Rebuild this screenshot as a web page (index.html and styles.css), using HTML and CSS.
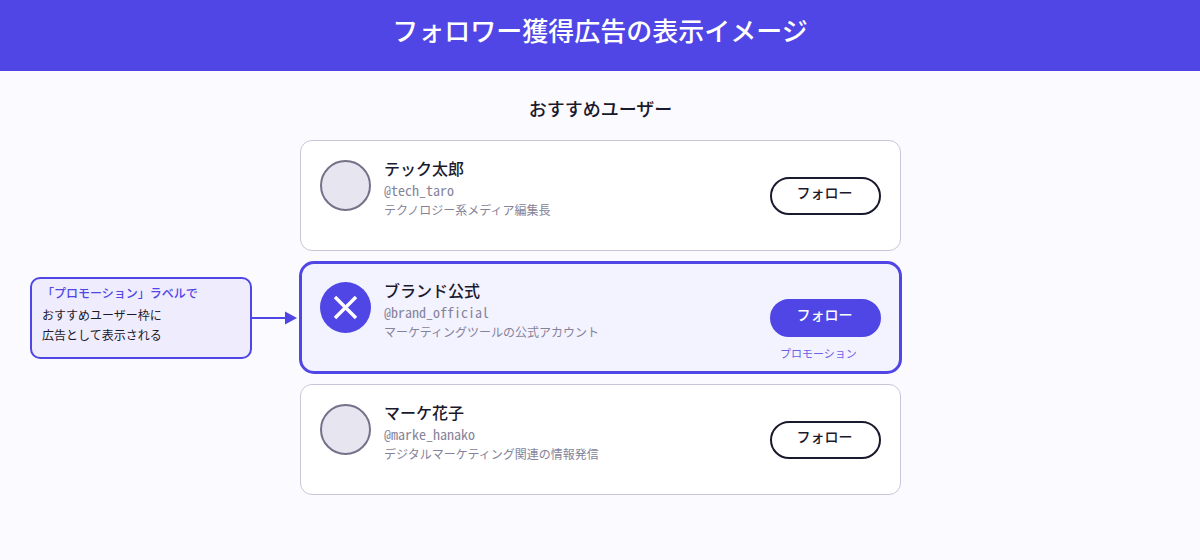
FILE: index.html
```html
<!DOCTYPE html>
<html lang="ja">
<head>
<meta charset="utf-8">
<meta name="viewport" content="width=device-width, initial-scale=1">
<title>フォロワー獲得広告の表示イメージ</title>
<link rel="stylesheet" href="styles.css">
</head>
<body>
<header class="banner"><h1 class="banner-title">フォロワー獲得広告の表示イメージ</h1></header>
<main class="content">
  <h2 class="section-title">おすすめユーザー</h2>
  <div class="board">
    <article class="card">
      <div class="avatar"></div>
      <div class="profile">
        <h3 class="name">テック太郎</h3>
        <p class="handle">@tech_taro</p>
        <p class="bio">テクノロジー系メディア編集長</p>
      </div>
      <div class="action"><button class="follow" type="button">フォロー</button></div>
    </article>
    <aside class="note">
      <div class="note-box">
        <p class="note-title">「プロモーション」ラベルで</p>
        <p class="note-text">おすすめユーザー枠に<br>広告として表示される</p>
      </div>
      <svg class="arrow" width="48" height="14" viewBox="0 0 48 14" aria-hidden="true"><path d="M0 7H36" stroke="#4f46e5" stroke-width="2"/><path d="M33 0.5L45 7L33 13.5Z" fill="#4f46e5"/></svg>
    </aside>
    <article class="card card-promoted">
      <svg class="avatar-brand" width="51" height="51" viewBox="0 0 51 51" aria-hidden="true"><circle cx="25.5" cy="25.5" r="25.5" fill="#4f46e5"/><path d="M15 15L36 36M36 15L15 36" stroke="#fff" stroke-width="3.4"/></svg>
      <div class="profile">
        <h3 class="name">ブランド公式</h3>
        <p class="handle">@brand_official</p>
        <p class="bio">マーケティングツールの公式アカウント</p>
      </div>
      <div class="action">
        <button class="follow follow-primary" type="button">フォロー</button>
        <span class="promo">プロモーション</span>
      </div>
    </article>
    <article class="card">
      <div class="avatar"></div>
      <div class="profile">
        <h3 class="name">マーケ花子</h3>
        <p class="handle">@marke_hanako</p>
        <p class="bio">デジタルマーケティング関連の情報発信</p>
      </div>
      <div class="action"><button class="follow" type="button">フォロー</button></div>
    </article>
  </div>
</main>
</body>
</html>
```
FILE: styles.css
```css
* { box-sizing: border-box; }
body {
  margin: 0;
  background: #fbfaff;
  color: #1a1a2e;
  font-family: "Noto Sans CJK JP", sans-serif;
}
h1, h2, h3, p { margin: 0; }
.banner {
  padding: 11px 0 22px;
  background: #4f46e5;
  color: #fff;
  text-align: center;
}
.banner-title { font-size: 26px; line-height: 38px; font-weight: 500; }
.content { padding: 23px 0 24px 1px; }
.section-title {
  margin-bottom: 18px;
  font-size: 18px;
  line-height: 28px;
  font-weight: 500;
  text-align: center;
}
.board {
  display: grid;
  grid-template-columns: 1fr 601px 1fr;
  row-gap: 11px;
}
.card {
  grid-column: 2;
  display: flex;
  min-height: 111px;
  padding: 19px 19px 10px;
  border: 1px solid #c8c6da;
  border-radius: 12px;
  background: #fff;
}
.card-promoted {
  grid-row: 2;
  margin: -1px;
  padding: 18px 18px 10px;
  border: 3px solid #4f46e5;
  border-radius: 15px;
  background: #f3f2ff;
}
.avatar, .avatar-brand { flex: none; width: 51px; height: 51px; }
.avatar { border: 2px solid #747289; border-radius: 50%; background: #e6e5f0; }
.profile { flex: 1; margin-left: 13px; color: #85839a; }
.name { margin-bottom: 3px; color: #1a1a2e; font-size: 16px; line-height: 16px; font-weight: 500; }
.handle { font-family: "Noto Sans Mono CJK JP", "Liberation Mono", monospace; font-size: 14px; line-height: 22px; }
.bio { font-size: 12px; line-height: 18px; }
.action { display: flex; flex-direction: column; align-items: flex-start; padding-top: 17px; }
.follow {
  width: 111px;
  height: 38px;
  padding: 0 2px 8px 0;
  border: 2px solid #1a1a2e;
  border-radius: 19px;
  background: #fff;
  color: #1a1a2e;
  font: 500 14px/20px "Noto Sans CJK JP", sans-serif;
}
.follow-primary { border-color: #4f46e5; background: #4f46e5; color: #fff; }
.promo { margin: 8px 0 0 10px; color: #6a62e8; font-size: 11px; line-height: 16px; }
.note { grid-column: 1; grid-row: 2; display: flex; align-items: center; padding-left: 29px; }
.note-box {
  width: 222px;
  padding: 4px 10px 12px;
  border: 2px solid #4f46e5;
  border-radius: 10px;
  background: #eeecfd;
  font-size: 12px;
}
.note-title { margin-bottom: 2px; color: #4f46e5; line-height: 20px; font-weight: 500; }
.note-text { line-height: 20px; }
.arrow { flex: none; }
```
